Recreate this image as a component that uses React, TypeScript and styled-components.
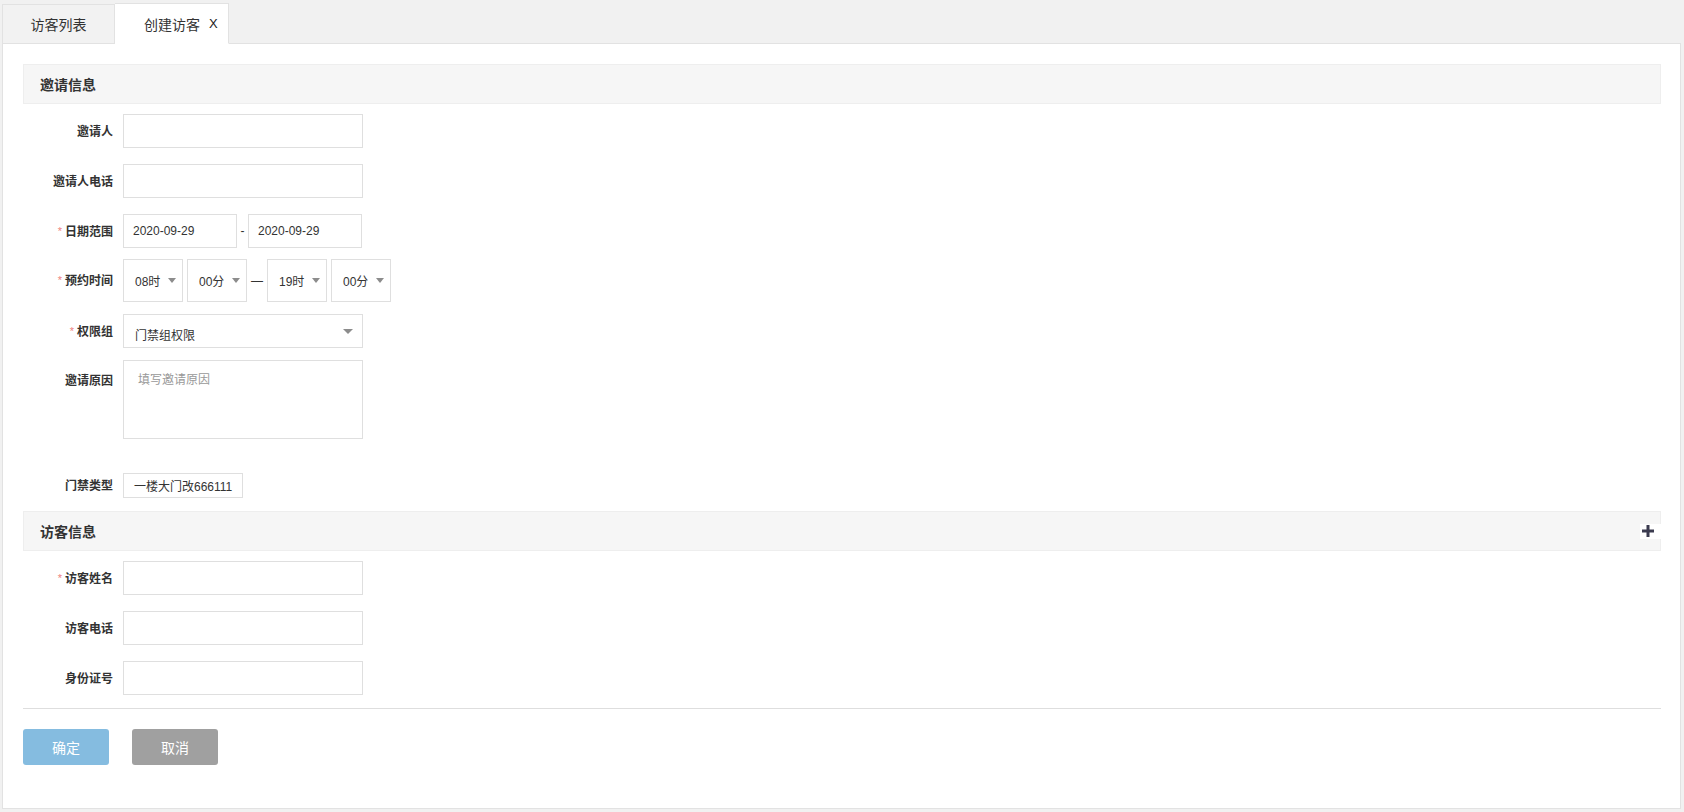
import React from "react";
import styled, { createGlobalStyle } from "styled-components";

const GlobalStyle = createGlobalStyle`
  html, body {
    margin: 0;
    padding: 0;
  }
  body {
    font-family: "Liberation Sans", "Noto Sans CJK SC", sans-serif;
    color: #333;
    background: #f1f1f1;
  }
  * {
    box-sizing: border-box;
  }
`;

export default function App() {
  return (
    <>
      <GlobalStyle />
      <StyledPage>
        <StyledTabBar>
          <StyledTab>访客列表</StyledTab>
          <StyledTab $active>
            创建访客
            <span className="close">X</span>
          </StyledTab>
        </StyledTabBar>

        <StyledPanel>
          <StyledSectionHeader>邀请信息</StyledSectionHeader>

          <StyledRow $gap={10}>
            <StyledLabel>邀请人</StyledLabel>
            <StyledInput />
          </StyledRow>

          <StyledRow $gap={16}>
            <StyledLabel>邀请人电话</StyledLabel>
            <StyledInput />
          </StyledRow>

          <StyledRow $gap={16}>
            <StyledLabel $required>日期范围</StyledLabel>
            <StyledInput $width={114} defaultValue="2020-09-29" />
            <StyledDash>-</StyledDash>
            <StyledInput $width={114} defaultValue="2020-09-29" />
          </StyledRow>

          <StyledRow $gap={11}>
            <StyledLabel $required>预约时间</StyledLabel>
            <StyledTimeGroup>
              <StyledSelect $width={60} $height={43}>
                08时
                <StyledArrow />
              </StyledSelect>
              <StyledSelect $width={60} $height={43}>
                00分
                <StyledArrow />
              </StyledSelect>
              <StyledLongDash>—</StyledLongDash>
              <StyledSelect $width={60} $height={43}>
                19时
                <StyledArrow />
              </StyledSelect>
              <StyledSelect $width={60} $height={43}>
                00分
                <StyledArrow />
              </StyledSelect>
            </StyledTimeGroup>
          </StyledRow>

          <StyledRow $gap={12}>
            <StyledLabel $required>权限组</StyledLabel>
            <StyledSelect $width={240} $height={34} $wide>
              <span className="value">门禁组权限</span>
              <StyledArrow $big />
            </StyledSelect>
          </StyledRow>

          <StyledRow $gap={12} $top>
            <StyledLabel $top>邀请原因</StyledLabel>
            <StyledTextArea placeholder="填写邀请原因" />
          </StyledRow>

          <StyledRow $gap={34}>
            <StyledLabel>门禁类型</StyledLabel>
            <StyledTag>一楼大门改666111</StyledTag>
          </StyledRow>

          <StyledSectionHeader $gap={13}>
            访客信息
            <StyledPlus>
              <svg width="14" height="14" viewBox="0 0 14 14">
                <path d="M7 1 V13 M1 7 H13" stroke="#3b3b4f" strokeWidth="3" />
              </svg>
            </StyledPlus>
          </StyledSectionHeader>

          <StyledRow $gap={10}>
            <StyledLabel $required>访客姓名</StyledLabel>
            <StyledInput />
          </StyledRow>

          <StyledRow $gap={16}>
            <StyledLabel>访客电话</StyledLabel>
            <StyledInput />
          </StyledRow>

          <StyledRow $gap={16}>
            <StyledLabel>身份证号</StyledLabel>
            <StyledInput />
          </StyledRow>

          <StyledDivider />

          <StyledActions>
            <StyledButton $color="#85bce0">确定</StyledButton>
            <StyledButton $color="#a0a0a0">取消</StyledButton>
          </StyledActions>
        </StyledPanel>
      </StyledPage>
    </>
  );
}

const StyledPage = styled.div`
  display: flex;
  flex-direction: column;
  height: 812px;
  padding: 0 3px 3px 2px;
  background: #f1f1f1;
`;

const StyledTabBar = styled.div`
  display: flex;
  align-items: flex-end;
  height: 43px;
  flex-shrink: 0;
`;

const StyledTab = styled.div<{ $active?: boolean }>`
  display: flex;
  align-items: center;
  justify-content: ${(p) => (p.$active ? "flex-start" : "center")};
  width: ${(p) => (p.$active ? "114px" : "113px")};
  height: ${(p) => (p.$active ? "41px" : "40px")};
  padding-left: ${(p) => (p.$active ? "29px" : "0")};
  margin-bottom: -1px;
  position: relative;
  border: 1px solid #e2e2e2;
  border-left: ${(p) => (p.$active ? "none" : "1px solid #e2e2e2")};
  border-bottom: ${(p) => (p.$active ? "1px solid #fff" : "1px solid #e2e2e2")};
  background: ${(p) => (p.$active ? "#fff" : "#f2f2f2")};
  font-size: 14px;
  color: #333;

  & > .close {
    margin-left: 9px;
    font-size: 13px;
    color: #222;
  }
`;

const StyledPanel = styled.div`
  flex: 1;
  padding: 20px 19px 20px 20px;
  border: 1px solid #e2e2e2;
  background: #fff;
`;

const StyledSectionHeader = styled.div<{ $gap?: number }>`
  display: flex;
  align-items: center;
  justify-content: space-between;
  height: 40px;
  margin-top: ${(p) => p.$gap ?? 0}px;
  padding-left: 16px;
  border: 1px solid #eeeeee;
  background: #f6f6f6;
  font-size: 14px;
  font-weight: 700;
  color: #333;
`;

const StyledPlus = styled.span`
  display: flex;
  align-items: center;
  justify-content: center;
  width: 21px;
  height: 15px;
  margin-right: -1px;
  padding-right: 5px;
  background: #fff;

  & > svg {
    display: block;
  }
`;

const StyledRow = styled.div<{ $gap: number; $top?: boolean }>`
  display: flex;
  align-items: ${(p) => (p.$top ? "flex-start" : "center")};
  margin-top: ${(p) => p.$gap}px;
`;

const StyledLabel = styled.label<{ $required?: boolean; $top?: boolean }>`
  width: 90px;
  margin-right: 10px;
  padding-top: ${(p) => (p.$top ? "13px" : "0")};
  text-align: right;
  font-size: 12px;
  font-weight: 700;
  line-height: 14px;
  color: #333;

  &::before {
    content: ${(p) => (p.$required ? '"*"' : '""')};
    margin-right: 3px;
    font-size: 11px;
    font-weight: 400;
    color: #ee7f7f;
    vertical-align: 1px;
  }
`;

const StyledInput = styled.input<{ $width?: number }>`
  width: ${(p) => p.$width ?? 240}px;
  height: 34px;
  padding: 0 9px;
  border: 1px solid #dfdfdf;
  outline: none;
  font-family: inherit;
  font-size: 12px;
  color: #333;
  background: #fff;
`;

const StyledDash = styled.span`
  width: 11px;
  text-align: center;
  font-size: 12px;
  color: #333;
`;

const StyledTimeGroup = styled.div`
  display: flex;
  align-items: center;
  gap: 4px;
`;

const StyledLongDash = styled.span`
  display: flex;
  justify-content: center;
  width: 12px;
  font-size: 12px;
  color: #333;
`;

const StyledSelect = styled.div<{ $width: number; $height: number; $wide?: boolean }>`
  display: flex;
  align-items: center;
  justify-content: ${(p) => (p.$wide ? "space-between" : "flex-start")};
  gap: 8px;
  width: ${(p) => p.$width}px;
  height: ${(p) => p.$height}px;
  padding: ${(p) => (p.$wide ? "0 9px 0 11px" : "0 0 0 11px")};
  border: 1px solid #dfdfdf;
  background: #fff;
  font-size: 12px;
  color: #333;

  & > .value {
    padding-top: 6px;
  }
`;

const StyledArrow = styled.span<{ $big?: boolean }>`
  width: 0;
  height: 0;
  border-left: ${(p) => (p.$big ? 5 : 4.5)}px solid transparent;
  border-right: ${(p) => (p.$big ? 5 : 4.5)}px solid transparent;
  border-top: 5px solid #8c8c8c;
`;

const StyledTextArea = styled.textarea`
  width: 240px;
  height: 79px;
  padding: 11px 14px;
  border: 1px solid #dfdfdf;
  outline: none;
  resize: none;
  font-family: inherit;
  font-size: 12px;
  line-height: 16px;
  color: #333;

  &::placeholder {
    color: #999;
  }
`;

const StyledTag = styled.div`
  display: flex;
  align-items: center;
  height: 25px;
  padding: 0 10px;
  border: 1px solid #dfdfdf;
  font-size: 12px;
  color: #333;
`;

const StyledDivider = styled.div`
  height: 1px;
  margin-top: 13px;
  background: #dedede;
`;

const StyledActions = styled.div`
  display: flex;
  gap: 23px;
  margin-top: 20px;
`;

const StyledButton = styled.button<{ $color: string }>`
  width: 86px;
  height: 36px;
  border: none;
  border-radius: 3px;
  background: ${(p) => p.$color};
  font-family: inherit;
  font-size: 14px;
  color: #fff;
  cursor: pointer;
`;
